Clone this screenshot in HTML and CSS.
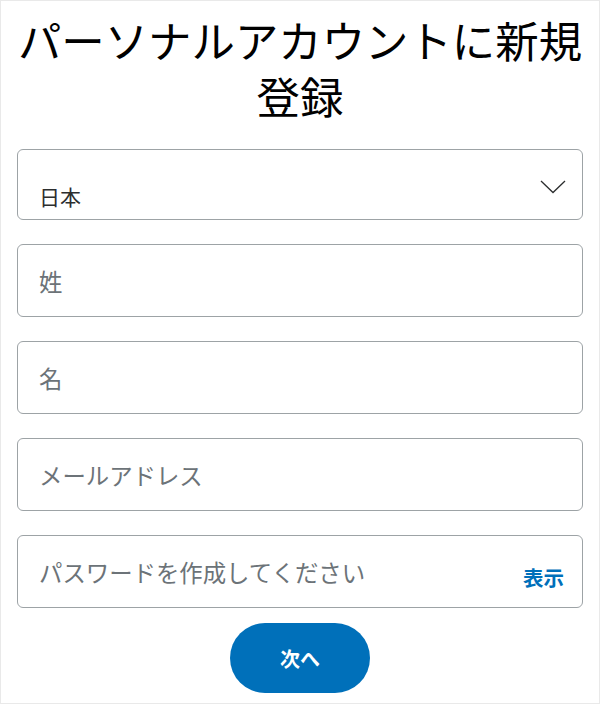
FILE: index.html
```html
<!DOCTYPE html>
<html lang="ja">
<head>
<meta charset="utf-8">
<title>パーソナルアカウントに新規登録</title>
<link rel="stylesheet" href="styles.css">
</head>
<body>
<div class="page">
  <h1 class="title">パーソナルアカウントに新規登録</h1>
  <form class="form">
    <div class="field field-select">
      <span class="select-value">日本</span>
      <svg class="chevron" width="26" height="14" viewBox="0 0 26 14" aria-hidden="true">
        <path d="M1 1 L13 12.5 L25 1" fill="none" stroke="#2c2e2f" stroke-width="1.3"/>
      </svg>
    </div>
    <div class="field"><input class="input" type="text" placeholder="姓"></div>
    <div class="field"><input class="input" type="text" placeholder="名"></div>
    <div class="field"><input class="input" type="email" placeholder="メールアドレス"></div>
    <div class="field field-password">
      <input class="input" type="password" placeholder="パスワードを作成してください">
      <span class="show">表示</span>
    </div>
    <div class="actions"><button class="next" type="button">次へ</button></div>
  </form>
</div>
</body>
</html>
```
FILE: styles.css
```css
* { box-sizing: border-box; }
html, body { margin: 0; padding: 0; background: #fff; }
body {
  font-family: "Noto Sans CJK JP", "Noto Sans", sans-serif;
  color: #2c2e2f;
}
.page {
  width: 600px;
  height: 704px;
  border: 1px solid #e9e9e9;
  padding: 0 16px;
  overflow: hidden;
}
.title {
  margin: 10px 0 26px;
  font-size: 43.4px;
  line-height: 56px;
  font-weight: 400;
  color: #000;
  text-align: center;
}
.form {
  display: flex;
  flex-direction: column;
  gap: 24px;
}
.field {
  height: 73px;
  border: 1.5px solid #9da3a6;
  border-radius: 6px;
  display: flex;
  align-items: center;
  padding: 0 0 0 21px;
  background: #fff;
}
.field-select {
  height: 71px;
  justify-content: space-between;
  padding-right: 16px;
}
.select-value {
  font-size: 21px;
  color: #2c2e2f;
  padding-top: 22px;
}
.chevron { margin-top: 4px; }
.input {
  flex: 1;
  border: 0;
  outline: 0;
  background: transparent;
  font-family: "Noto Sans CJK JP", "Noto Sans", sans-serif;
  font-size: 23.4px;
  color: #2c2e2f;
  padding: 0;
  min-width: 0;
}
.input::placeholder { color: #6c7378; opacity: 1; }
.field-password { padding-right: 18px; }
.show {
  font-size: 20.5px;
  font-weight: 700;
  color: #0070ba;
  padding-top: 11px;
}
.actions {
  display: flex;
  justify-content: center;
  margin-top: -9px;
}
.next {
  width: 140px;
  height: 70px;
  border: 0;
  border-radius: 35px;
  background: #0070ba;
  color: #fff;
  font-family: "Noto Sans CJK JP", "Noto Sans", sans-serif;
  font-size: 20px;
  font-weight: 700;
}
```
